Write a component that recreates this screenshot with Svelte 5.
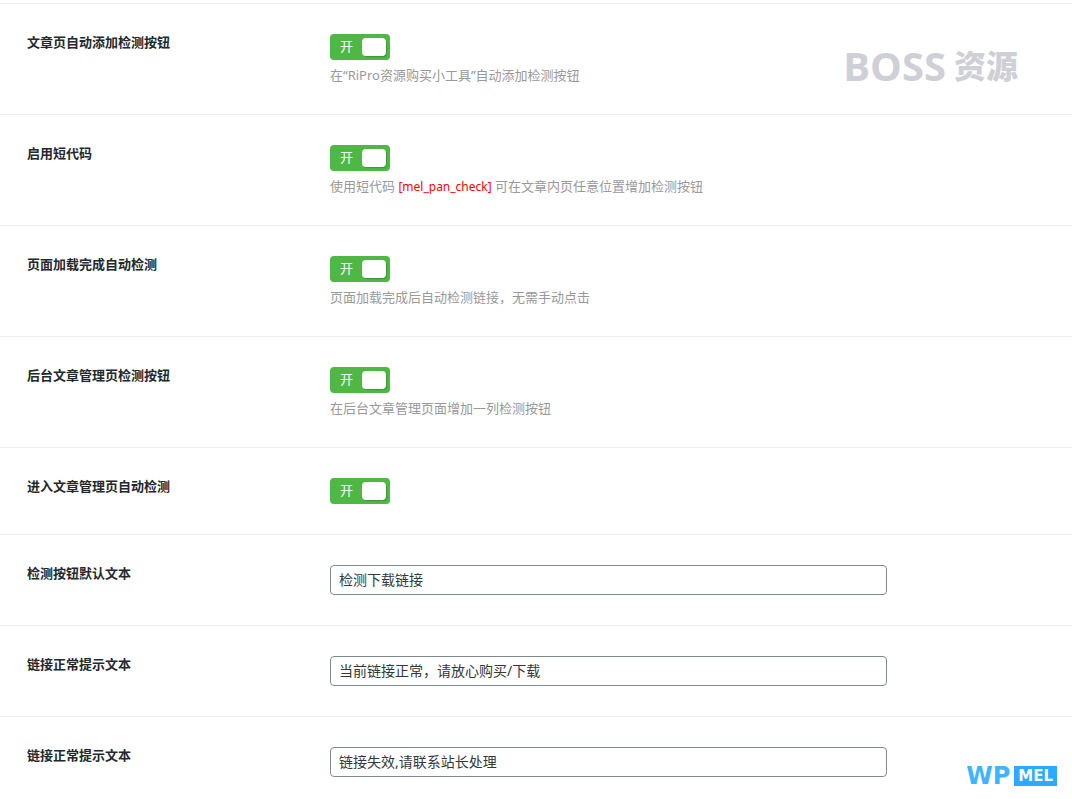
<script>
  let switches = $state([
    { id: 'auto_button', title: '文章页自动添加检测按钮', on: true, before: '在“RiPro资源购买小工具”自动添加检测按钮' },
    { id: 'shortcode', title: '启用短代码', on: true, before: '使用短代码 ', code: '[mel_pan_check]', after: ' 可在文章内页任意位置增加检测按钮' },
    { id: 'auto_check', title: '页面加载完成自动检测', on: true, before: '页面加载完成后自动检测链接，无需手动点击' },
    { id: 'admin_button', title: '后台文章管理页检测按钮', on: true, before: '在后台文章管理页面增加一列检测按钮' },
    { id: 'admin_auto', title: '进入文章管理页自动检测', on: true },
  ])

  let texts = $state([
    { id: 'text_default', title: '检测按钮默认文本', value: '检测下载链接' },
    { id: 'text_valid', title: '链接正常提示文本', value: '当前链接正常，请放心购买/下载' },
    { id: 'text_invalid', title: '链接正常提示文本', value: '链接失效,请联系站长处理' },
  ])
</script>

<main class="options">
  {#each switches as item (item.id)}
    <div class="field">
      <label class="title" for={item.id}>{item.title}</label>
      <div class="body">
        <label class="switcher">
          <input type="checkbox" id={item.id} bind:checked={item.on} />
          <span class="state">{item.on ? '开' : '关'}</span>
          <span class="knob"></span>
        </label>
        {#if item.before}
          <p class="desc">{item.before}{#if item.code}<span class="code">{item.code}</span>{item.after}{/if}</p>
        {/if}
      </div>
    </div>
  {/each}

  {#each texts as item (item.id)}
    <div class="field">
      <label class="title" for={item.id}>{item.title}</label>
      <div class="body">
        <input class="text" type="text" id={item.id} bind:value={item.value} />
      </div>
    </div>
  {/each}

  <div class="boss"><span>BOSS</span><span class="boss-cn">资源</span></div>
  <div class="wpmel"><span class="wp">WP</span><span class="mel">MEL</span></div>
</main>

<style>
  :global(body) {
    margin: 0;
    background: #fff;
  }

  .options {
    position: relative;
    padding-top: 3px;
    overflow: hidden;
    font-family: 'Noto Sans', 'Noto Sans CJK SC', sans-serif;
    font-size: 13px;
    color: #23282d;
  }

  .field {
    display: flex;
    padding: 30px 27px;
    border-top: 1px solid #eee;
  }

  .title {
    flex: 0 0 303px;
    line-height: 17px;
    font-weight: 600;
  }

  .body {
    flex: 1;
    min-width: 0;
  }

  .switcher {
    display: flex;
    align-items: center;
    justify-content: space-between;
    box-sizing: border-box;
    width: 60px;
    height: 26px;
    padding: 0 4px 0 10px;
    border-radius: 4px;
    background: #888;
    color: #fff;
    cursor: pointer;
  }

  .switcher:has(input:checked) {
    background: #4fb845;
  }

  .switcher input {
    position: absolute;
    opacity: 0;
    pointer-events: none;
  }

  .state {
    padding-bottom: 2px;
    line-height: 24px;
  }

  .knob {
    width: 24px;
    height: 18px;
    border-radius: 4px;
    background: #fff;
    box-shadow: 1px 1px 1px rgba(0, 0, 0, 0.2);
  }

  .desc {
    margin: 6px 0 0;
    line-height: 18px;
    color: #999;
  }

  .code {
    font-size: 12px;
    line-height: 16px;
    color: #f00;
  }

  .text {
    display: block;
    box-sizing: border-box;
    width: 100%;
    max-width: 557px;
    height: 30px;
    margin: 0;
    padding: 0 8px 2px;
    border: 1px solid #7e8993;
    border-radius: 4px;
    background: #fff;
    font-family: inherit;
    font-size: 14px;
    color: #32373c;
  }

  .text:focus {
    border-color: #007cba;
    outline: none;
  }

  /* watermarks laid over the form */
  .boss,
  .wpmel {
    position: absolute;
    display: flex;
    align-items: center;
    pointer-events: none;
  }

  .boss {
    top: 46px;
    right: 54px;
    gap: 8px;
    font-family: 'Open Sans', 'Noto Sans CJK SC', sans-serif;
    font-size: 40px;
    line-height: 40px;
    font-weight: 700;
    color: #cfd0d6;
  }

  .boss-cn {
    font-size: 32px;
    font-weight: 900;
  }

  .wpmel {
    right: 15px;
    bottom: 21px;
    gap: 4px;
    font-family: 'DejaVu Sans', sans-serif;
    font-weight: 700;
  }

  .wp {
    font-size: 24px;
    line-height: 20px;
    color: #41b4fe;
  }

  .mel {
    padding: 0 4px;
    background: #2baafe;
    font-size: 15px;
    line-height: 20px;
    color: #fff;
  }
</style>
